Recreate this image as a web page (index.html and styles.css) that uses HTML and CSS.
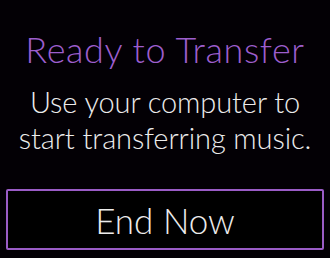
FILE: index.html
```html
<!DOCTYPE html>
<html lang="en">
  <head>
    <meta charset="UTF-8" />
    <title>Ready to Transfer</title>
    <link rel="stylesheet" href="styles.css">
  </head>
  <body>
    <div class="screen">
      <h1>Ready to Transfer</h1>
      <p>Use your computer to<br />start transferring music.</p>
      <button class="end-btn">End Now</button>
    </div>
  </body>
</html>
```
FILE: styles.css
```css
body {
  margin: 0;
  background: #000;
  font-family: "Lato", sans-serif;
}

.screen {
  width: 330px;
  height: 258px;
  display: flex;
  flex-direction: column;
  align-items: center;
  background: #030005;
}

h1 {
  margin: 29px 0 0;
  color: #9d5ecd;
  font-size: 36px;
  font-weight: 300;
  line-height: 40px;
  letter-spacing: 0.6px;
  white-space: nowrap;
}

p {
  margin: 15px 0 0;
  color: #ececec;
  font-size: 29px;
  font-weight: 300;
  line-height: 36px;
  letter-spacing: -0.1px;
  text-align: center;
  white-space: nowrap;
}

.end-btn {
  margin-top: 33px;
  width: 318px;
  height: 61px;
  padding: 0;
  border: 2px solid #9a5cc6;
  border-radius: 2px;
  background: #000;
  color: #ececec;
  font-family: "Lato", sans-serif;
  font-size: 35px;
  font-weight: 300;
}
```
